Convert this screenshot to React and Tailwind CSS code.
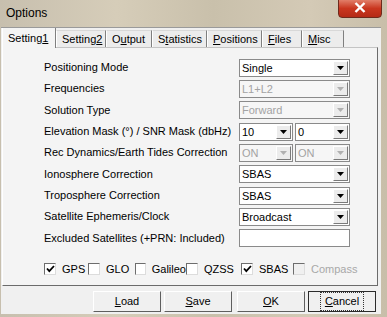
import React from 'react';

const tabs = [
  { pre: 'Setting', u: '1', post: '', w: 'w-[54px]' },
  { pre: 'Setting', u: '2', post: '', w: 'w-[50px]' },
  { pre: 'O', u: 'u', post: 'tput', w: 'w-[46px]' },
  { pre: 'S', u: 't', post: 'atistics', w: 'w-[55px]' },
  { pre: '', u: 'P', post: 'ositions', w: 'w-[55px]' },
  { pre: '', u: 'F', post: 'iles', w: 'w-[40px]' },
  { pre: '', u: 'M', post: 'isc', w: 'w-[42px]' },
];

const Arrow = ({ disabled }) => (
  <span className="w-[15px] h-[14px] my-[1px] mr-[1px] flex items-center justify-center bg-[#ececec] border-t border-l border-t-white border-l-white border-r border-b border-r-[#7a7a7a] border-b-[#7a7a7a]">
    <svg width="7" height="4" viewBox="0 0 7 4">
      <path d="M0 0h7L3.5 4z" fill={disabled ? '#b0b0b0' : '#000'} />
    </svg>
  </span>
);

const Combo = ({ value, disabled, className }) => (
  <div
    className={`h-[18px] flex border border-[#8a8a8a] ${
      disabled ? 'bg-[#f6f6f6] text-[#a3a3a3]' : 'bg-white text-black'
    } ${className}`}
  >
    <span className="flex-1 pl-[2px] leading-[16px] overflow-hidden whitespace-nowrap">{value}</span>
    <Arrow disabled={disabled} />
  </div>
);

const Row = ({ label, h, children }) => (
  <div className={`flex items-center ${h}`}>
    <span className="w-[236px] pl-[41px] whitespace-nowrap">{label}</span>
    <div className="w-[111px] flex gap-[2px]">{children}</div>
  </div>
);

const Check = ({ label, checked, disabled, className }) => (
  <div className={`flex items-center ${className}`}>
    <span
      className={`w-[12px] h-[12px] flex items-center justify-center border-t border-l border-t-[#6d6d6d] border-l-[#6d6d6d] border-r border-b border-r-[#dcdcdc] border-b-[#dcdcdc] ${
        disabled ? 'bg-[#f0f0f0]' : 'bg-white'
      }`}
    >
      {checked && (
        <svg width="9" height="8" viewBox="0 0 9 8">
          <path d="M1 3.5l2.3 2.6L8 1" stroke="#000" strokeWidth="1.8" fill="none" />
        </svg>
      )}
    </span>
    <span className={`ml-[6px] ${disabled ? 'text-[#a8a8a8]' : 'text-black'}`}>{label}</span>
  </div>
);

const Button = ({ u, post, focused }) => (
  <div
    className={`w-[68px] h-[21px] flex items-center justify-center bg-[#f0f0f0] ${
      focused
        ? 'border border-[#2b2b2b]'
        : 'border-t border-l border-t-white border-l-white border-r border-b border-r-[#5f5f5f] border-b-[#5f5f5f]'
    }`}
  >
    <span className={focused ? 'px-[4px] border border-dotted border-[#333]' : ''}>
      <span className="underline">{u}</span>
      {post}
    </span>
  </div>
);

export default function App() {
  return (
    <div className="relative w-[387px] h-[317px] overflow-hidden bg-[linear-gradient(90deg,#c7bfae_0%,#d6cdb9_30%,#c9c0ab_55%,#d4cab6_80%,#c8bea9_100%)] font-['Liberation_Sans',Arial,sans-serif] text-[11px] text-black">
      {/* title bar */}
      <div className="h-[27px] flex items-center pl-[6px] pb-[1px] text-[12px] text-black">Options</div>
      <div className="absolute top-[-3px] left-[338px] w-[44px] h-[21px] rounded-b-[4px] bg-[linear-gradient(180deg,#e78f7a,#c9361f_55%,#b52a16)] border border-[#6e2a1c] flex items-center justify-center">
        <svg width="12" height="11" viewBox="0 0 12 11">
          <path d="M1.5 1l9 9M10.5 1l-9 9" stroke="#fff" strokeWidth="2.4" />
        </svg>
      </div>

      {/* client */}
      <div className="ml-[1px] mr-[6px] h-[287px] bg-[#f0f0f0] border-t border-[#9a9a9a] flex flex-col">
        {/* tabs */}
        <div className="h-[19px] flex items-end pl-[1px] relative z-10">
          {tabs.map((t, i) => (
            <div
              key={i}
              className={`${t.w} flex items-center pl-[5px] border-l border-l-white border-r border-r-[#7f7f7f] ${
                i === 0 ? 'h-[20px] bg-[#f4f4f4] mb-[-1px] pt-[1px]' : 'h-[17px] bg-[#ececec] border-t border-t-[#d8d8d8]'
              }`}
            >
              {t.pre}
              <span className="underline">{t.u}</span>
              {t.post}
            </div>
          ))}
        </div>

        {/* panel */}
        <div className="ml-[1px] w-[376px] h-[239px] bg-[#f4f4f4] border-t border-l border-t-[#c4c4c4] border-l-white border-r border-b border-r-[#6b6b6b] border-b-[#6b6b6b] pt-[9px]">
          <Row label="Positioning Mode" h="h-[21px]">
            <Combo value="Single" className="w-full" />
          </Row>
          <Row label="Frequencies" h="h-[21px]">
            <Combo value="L1+L2" disabled className="w-full" />
          </Row>
          <Row label="Solution Type" h="h-[22px]">
            <Combo value="Forward" disabled className="w-full" />
          </Row>
          <Row label="Elevation Mask (°) / SNR Mask (dbHz)" h="h-[21px]">
            <Combo value="10" className="w-[54px]" />
            <Combo value="0" className="w-[55px]" />
          </Row>
          <Row label="Rec Dynamics/Earth Tides Correction" h="h-[21px]">
            <Combo value="ON" disabled className="w-[54px]" />
            <Combo value="ON" disabled className="w-[55px]" />
          </Row>
          <Row label="Ionosphere Correction" h="h-[22px]">
            <Combo value="SBAS" className="w-full" />
          </Row>
          <Row label="Troposphere Correction" h="h-[21px]">
            <Combo value="SBAS" className="w-full" />
          </Row>
          <Row label="Satellite Ephemeris/Clock" h="h-[21px]">
            <Combo value="Broadcast" className="w-full" />
          </Row>
          <Row label="Excluded Satellites (+PRN: Included)" h="h-[22px]">
            <div className="w-full h-[18px] bg-white border border-[#8a8a8a]" />
          </Row>
          <div className="flex items-center h-[20px] mt-[10px] pl-[41px]">
            <Check label="GPS" checked className="w-[44px]" />
            <Check label="GLO" className="w-[47px]" />
            <Check label="Galileo" className="w-[51px]" />
            <Check label="QZSS" className="w-[55px]" />
            <Check label="SBAS" checked className="w-[52px]" />
            <Check label="Compass" disabled />
          </div>
        </div>

        {/* buttons */}
        <div className="flex pl-[92px] mt-[5px]">
          <Button u="L" post="oad" />
          <div className="w-[3px]" />
          <Button u="S" post="ave" />
          <div className="w-[5px]" />
          <Button u="O" post="K" />
          <div className="w-[3px]" />
          <Button u="C" post="ancel" focused />
        </div>
      </div>
    </div>
  );
}
